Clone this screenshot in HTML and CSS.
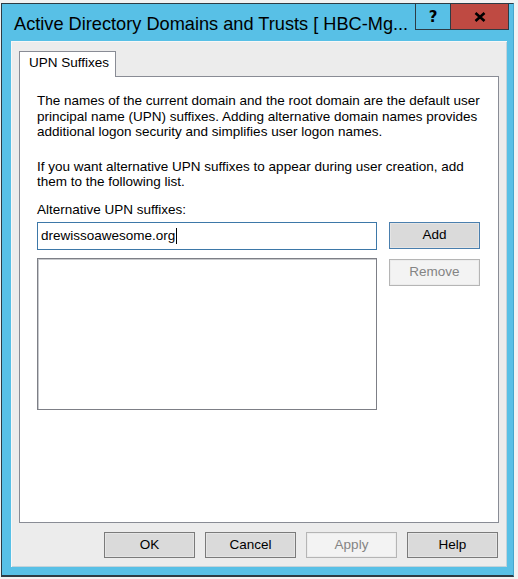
FILE: index.html
```html
<!DOCTYPE html>
<html>
<head>
<meta charset="utf-8">
<link rel="stylesheet" href="styles.css">
</head>
<body>
<div class="window">
  <div class="titlebar">
    <div class="title">Active Directory Domains and Trusts [ HBC-Mg...</div>
    <div class="caption">
      <div class="cbtn help">?</div>
      <div class="cbtn close">
        <svg width="12" height="10" viewBox="0 0 12 10"><path d="M1.5 1 L10.5 9 M10.5 1 L1.5 9" stroke="#000" stroke-width="2.6" fill="none"/></svg>
      </div>
    </div>
  </div>
  <div class="client">
    <div class="tabs"><div class="tab">UPN Suffixes</div></div>
    <div class="panel">
      <p class="para">The names of the current domain and the root domain are the default user principal name (UPN) suffixes. Adding alternative domain names provides additional logon security and simplifies user logon names.</p>
      <p class="para last">If you want alternative UPN suffixes to appear during user creation, add them to the following list.</p>
      <div class="label">Alternative UPN suffixes:</div>
      <div class="row">
        <div class="fields">
          <div class="input">drewissoawesome.org<span class="caret"></span></div>
          <div class="listbox"></div>
        </div>
        <div class="side">
          <div class="btn default">Add</div>
          <div class="btn disabled">Remove</div>
        </div>
      </div>
    </div>
    <div class="footer">
      <div class="btn">OK</div>
      <div class="btn">Cancel</div>
      <div class="btn disabled">Apply</div>
      <div class="btn">Help</div>
    </div>
  </div>
</div>
</body>
</html>
```

FILE: styles.css
```css
html, body {
  margin: 0;
  padding: 0;
}
body {
  background: #f2f2f2;
  width: 518px;
  height: 579px;
  overflow: hidden;
  font-family: "Liberation Sans", Arial, sans-serif;
  font-size: 13.5px;
  color: #000;
}
.window {
  box-sizing: border-box;
  margin: 3px 0 0 1px;
  width: 513px;
  height: 574px;
  background: #58c0e6;
  border-style: solid;
  border-color: #2d3b44;
  border-width: 1px 1px 2px 1px;
  border-right-color: #45a6cc;
  display: flex;
  flex-direction: column;
}
.titlebar {
  height: 37px;
  display: flex;
  justify-content: space-between;
  align-items: flex-start;
  padding: 0 4px 0 12px;
}
.title {
  margin-top: 10px;
  font-size: 18.2px;
  line-height: 20px;
  color: #000;
  white-space: nowrap;
}
.caption {
  display: flex;
  border: 1px solid #2d3b44;
  border-top: 0;
}
.cbtn {
  height: 25px;
  display: flex;
  align-items: center;
  justify-content: center;
}
.help {
  width: 34px;
  font-weight: bold;
  font-size: 15px;
  font-family: "DejaVu Sans", sans-serif;
}
.close {
  width: 57px;
  background: #bf4a42;
  border-left: 1px solid #2d3b44;
}
.client {
  margin: 0 6px 0 9px;
  height: 526px;
  background: #ececec;
  display: flex;
  flex-direction: column;
  padding: 10px 8px 0 8px;
  box-sizing: border-box;
  box-shadow: inset 1px 1px 0 #f7f7f7, inset -1px -1px 0 #c3d3da;
}
.tabs {
  display: flex;
}
.tab {
  position: relative;
  z-index: 1;
  box-sizing: border-box;
  height: 26px;
  width: 97px;
  margin-bottom: -1px;
  background: #fff;
  border: 1px solid #898c95;
  border-bottom: 0;
  padding: 3px 0 0 9px;
  line-height: 16px;
  white-space: nowrap;
}
.panel {
  box-sizing: border-box;
  height: 447px;
  background: #fff;
  border: 1px solid #898c95;
  padding: 16px 18px 0 17px;
}
.para {
  margin: 0 0 19px 0;
  line-height: 15.5px;
}
.para.last {
  margin-bottom: 12px;
}
.label {
  margin: 0;
  line-height: 16px;
}
.row {
  display: flex;
  gap: 12px;
  margin-top: 4px;
}
.fields {
  display: flex;
  flex-direction: column;
  gap: 8px;
}
.input {
  box-sizing: border-box;
  width: 340px;
  height: 28px;
  border: 1px solid #3d78a8;
  padding: 0 3px;
  display: flex;
  align-items: center;
  white-space: nowrap;
}
.caret {
  display: inline-block;
  width: 1px;
  height: 16px;
  background: #000;
  margin-left: 1px;
}
.listbox {
  box-sizing: border-box;
  width: 340px;
  height: 152px;
  border: 1px solid #7d7f86;
  box-shadow: inset 1px 1px 0 #c7c9cd;
}
.side {
  display: flex;
  flex-direction: column;
  gap: 10px;
}
.btn {
  box-sizing: border-box;
  width: 91px;
  height: 26px;
  background: #dadada;
  border: 1px solid #7a7a7a;
  box-shadow: inset 0 0 0 1px #e4e4e4;
  display: flex;
  align-items: center;
  justify-content: center;
  line-height: 16px;
}
.side .btn {
  height: 27px;
}
.btn.default {
  border-color: #4a7fae;
}
.btn.disabled {
  background: #f3f3f3;
  border-color: #b5b5b5;
  box-shadow: inset 0 0 0 1px #ececec;
  color: #848484;
}
.footer {
  display: flex;
  justify-content: flex-end;
  gap: 10px;
  padding: 9px 1px 0 0;
}
```
